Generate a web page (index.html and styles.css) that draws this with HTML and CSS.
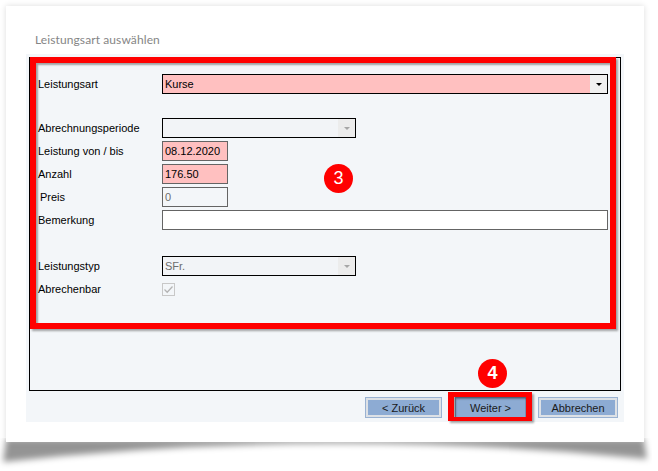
FILE: index.html
```html
<!DOCTYPE html>
<html lang="de">
<head>
    <meta charset="UTF-8">
    <title>Leistungsart auswählen</title>
    <link rel="stylesheet" href="styles.css">
</head>
<body>
    <div class="sheet">
        <svg class="curl" width="652" height="36" viewBox="0 0 652 36">
            <defs>
                <filter id="soft" x="-5%" y="-50%" width="110%" height="200%">
                    <feGaussianBlur stdDeviation="3"/>
                </filter>
            </defs>
            <path d="M6 2 L644 2 L647 21 Q326 -12 3 24 Z" fill="#000" fill-opacity="0.42" filter="url(#soft)"/>
        </svg>

        <div class="card">
            <h1 class="title">Leistungsart auswählen</h1>

            <div class="dialog">
                <div class="panel">
                    <div class="row first">
                        <label>Leistungsart</label>
                        <div class="field combo pink wide"><span>Kurse</span><span class="drop"></span></div>
                    </div>

                    <div class="row group">
                        <label>Abrechnungsperiode</label>
                        <div class="field combo disabled medium"><span></span><span class="drop"></span></div>
                    </div>
                    <div class="row">
                        <label>Leistung von / bis</label>
                        <div class="field pink short">08.12.2020</div>
                    </div>
                    <div class="row">
                        <label>Anzahl</label>
                        <div class="field pink short">176.50</div>
                    </div>
                    <div class="row">
                        <label class="indent">Preis</label>
                        <div class="field plain short grey-text">0</div>
                    </div>
                    <div class="row">
                        <label>Bemerkung</label>
                        <div class="field white wide"></div>
                    </div>

                    <div class="row group-2">
                        <label>Leistungstyp</label>
                        <div class="field combo disabled medium grey-text"><span>SFr.</span><span class="drop"></span></div>
                    </div>
                    <div class="row">
                        <label>Abrechenbar</label>
                        <span class="check">
                            <svg width="11" height="11" viewBox="0 0 11 11"><path d="M1.5 5.5 L4.2 8.2 L9.5 2.5" fill="none" stroke="#b4b4b4" stroke-width="1.3"/></svg>
                        </span>
                    </div>

                    <div class="mark mark-fields"></div>
                    <div class="badge badge-3">3</div>
                </div>

                <div class="buttons">
                    <button class="btn btn-back">&lt; Zurück</button>
                    <span class="focus">
                        <button class="btn btn-next">Weiter &gt;</button>
                        <span class="mark mark-next"></span>
                        <span class="badge badge-4">4</span>
                    </span>
                    <button class="btn btn-cancel">Abbrechen</button>
                </div>
            </div>
        </div>
    </div>
</body>
</html>
```

FILE: styles.css
```css
* {
    box-sizing: border-box;
    margin: 0;
    padding: 0;
}

html {
    background: #fff;
}

body {
    min-height: 471px;
    padding: 6px;
    font-family: "Liberation Sans", Arial, sans-serif;
    font-size: 11px;
    color: #000;
}

.sheet {
    position: relative;
    width: 638px;
    height: 436px;
}

/* curled page shadow under the bottom edge */
.curl {
    position: absolute;
    z-index: 0;
    left: -6px;
    top: 432px;
}

.card {
    position: relative;
    z-index: 1;
    height: 100%;
    background: #fff;
    padding: 0 20px 20px;
    box-shadow: 0 0 6px rgba(0, 0, 0, 0.14);
}

.title {
    height: 48px;
    padding: 26px 0 0 9px;
    font-family: Lato, "Liberation Sans", sans-serif;
    font-size: 12px;
    font-weight: normal;
    line-height: 16px;
    letter-spacing: 0.1px;
    color: #858585;
}

.dialog {
    height: 368px;
    padding: 3px;
    background: #f3f6f9;
}

.panel {
    position: relative;
    height: 334px;
    border: 1px solid #000;
    padding-left: 8px;
    padding-top: 1px;
}

.row {
    display: flex;
    align-items: center;
    height: 20px;
    margin-top: 3px;
}

.row.first {
    margin-top: 15px;
}

.row.group {
    margin-top: 24px;
}

.row.group-2 {
    margin-top: 26px;
}

label {
    width: 124px;
    flex-shrink: 0;
}

label.indent {
    padding-left: 2px;
}

.field {
    display: flex;
    align-items: center;
    height: 20px;
    border: 1px solid #646464;
    padding: 0 2px;
    white-space: nowrap;
}

.short {
    width: 66px;
}

.medium {
    width: 194px;
}

.wide {
    width: 446px;
}

.pink {
    background: #ffc0c0;
}

.white {
    background: #fff;
}

.plain {
    background: #f3f6f9;
}

.grey-text {
    color: #6d6d6d;
}

.combo {
    justify-content: space-between;
    border-color: #000;
    padding-right: 0;
}

.combo.disabled {
    background: #f2f4f7;
}

.drop {
    display: flex;
    align-items: center;
    justify-content: center;
    width: 17px;
    height: 18px;
    background: #f0f0f0;
}

.drop::after {
    content: "";
    border-left: 3px solid transparent;
    border-right: 3px solid transparent;
    border-top: 3px solid #000;
}

.disabled .drop {
    background: #ececec;
}

.disabled .drop::after {
    border-top-color: #a6a6a6;
}

.check {
    display: flex;
    align-items: center;
    justify-content: center;
    width: 13px;
    height: 13px;
    border: 1px solid #c8c8c8;
    background: #f3f6f9;
}

.mark {
    position: absolute;
    border: 6px solid #f00;
    box-shadow: 2px 2px 2px rgba(0, 0, 0, 0.35), inset 2px 2px 2px rgba(0, 0, 0, 0.35);
}

.mark-fields {
    left: 0;
    top: -1px;
    width: 586px;
    height: 272px;
}

.badge {
    position: absolute;
    display: flex;
    align-items: center;
    justify-content: center;
    width: 29px;
    height: 29px;
    border-radius: 50%;
    background: #f00;
    color: #fff;
    font-size: 18px;
}

.badge-3 {
    left: 294px;
    top: 106px;
}

.buttons {
    display: flex;
    justify-content: flex-end;
    align-items: center;
    margin: 6px 3px 0 0;
}

.btn {
    height: 21px;
    border: 1px solid #9ab2d2;
    background: #8dabd3;
    box-shadow: inset 0 0 0 2px #dde1e6;
    font-family: "Liberation Sans", Arial, sans-serif;
    font-size: 11px;
    color: #1a1a1a;
}

.btn-back {
    width: 77px;
}

.btn-cancel {
    width: 80px;
}

.focus {
    position: relative;
    display: flex;
    margin: 0 12px 0 13px;
}

.btn-next {
    width: 71px;
    border-color: #7890b0;
    box-shadow: none;
}

.mark-next {
    top: -5px;
    left: -7px;
    right: -6px;
    bottom: -3px;
    border-width: 5px 6px 4px 6px;
}

.badge-4 {
    left: 23px;
    top: -38px;
    font-weight: bold;
}
```
